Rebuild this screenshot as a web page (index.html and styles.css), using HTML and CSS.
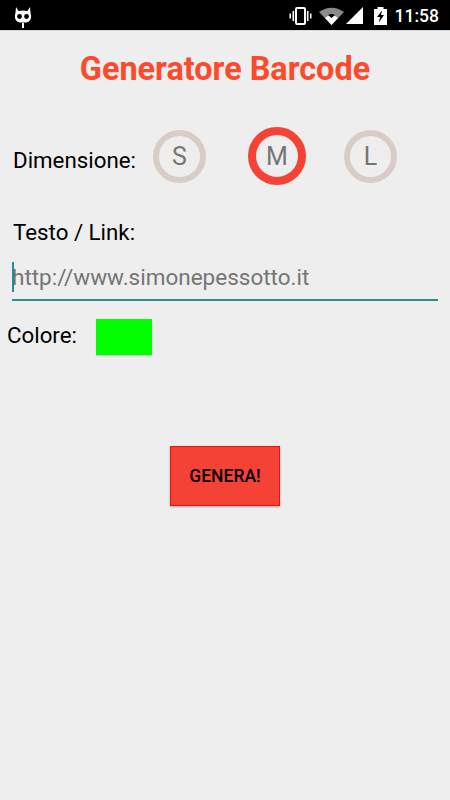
FILE: index.html
```html
<!DOCTYPE html>
<html lang="it">
<head>
  <meta charset="UTF-8" />
  <meta name="viewport" content="width=device-width, initial-scale=1.0"/>
  <title>Generatore Barcode</title>
  <link rel="stylesheet" href="styles.css">
</head>
<body>
  <!-- Status bar -->
  <div class="status-bar">
    <svg class="cat-icon" width="18" height="22" viewBox="0 0 18 22">
      <path d="M2 0 L4.500 4 Q9 3 13.500 4 L16 0 L16.500 6 Q17.500 8 17 11 Q16 15 12 15.500 L6 15.500 Q2 15 1 11 Q0.500 8 1.500 6 Z" fill="#fff"/>
      <circle cx="5.500" cy="9.500" r="2.400" fill="#000"/>
      <circle cx="12.500" cy="9.500" r="2.400" fill="#000"/>
      <rect x="8" y="16" width="2" height="5" fill="#fff"/>
    </svg>
    <div class="status-right">
      <svg width="23" height="18" viewBox="0 0 23 18">
        <rect x="7" y="1" width="9" height="16" rx="1" fill="none" stroke="#fff" stroke-width="2"/>
        <rect x="3.500" y="4" width="1.600" height="10" fill="#fff"/>
        <rect x="17.900" y="4" width="1.600" height="10" fill="#fff"/>
        <rect x="0.500" y="6.500" width="1.500" height="5" fill="#fff"/>
        <rect x="21" y="6.500" width="1.500" height="5" fill="#fff"/>
      </svg>
      <svg class="wifi" width="25" height="18" viewBox="0 0 25 18">
        <path d="M0 5 Q12.500 -3.500 25 5 L12.500 18 Z" fill="#8a8a8a"/>
        <path d="M6 11 Q12.500 5 19 11 L12.500 18 Z" fill="#fff"/>
        <path d="M9 8 Q12.500 6 16 8 L12.500 11 Z" fill="#000"/>
      </svg>
      <svg class="signal" width="17" height="17" viewBox="0 0 17 17">
        <path d="M0 17 L17 0 L17 17 Z" fill="#fff"/>
      </svg>
      <svg class="battery" width="13" height="18" viewBox="0 0 13 18">
        <path d="M3.500 0 H9.500 V2 H13 V18 H0 V2 H3.500 Z" fill="#fff"/>
        <path d="M8 3.500 L3 10 H6 L5 15.500 L10 8 H7 Z" fill="#000"/>
      </svg>
      <span class="clock">11:58</span>
    </div>
  </div>

  <div class="content">
    <h1 class="title">Generatore Barcode</h1>

    <!-- Dimensione -->
    <div class="size-row">
      <span class="label size-label">Dimensione:</span>
      <div class="size-options">
        <div class="size-btn">S</div>
        <div class="size-btn active">M</div>
        <div class="size-btn">L</div>
      </div>
    </div>

    <div class="label link-label">Testo / Link:</div>
    <div class="link-input">
      <span class="cursor"></span>
      <span class="placeholder">http://www.simonepessotto.it</span>
    </div>

    <!-- Colore -->
    <div class="color-row">
      <span class="label color-label">Colore:</span>
      <div class="color-box"></div>
    </div>

    <div class="button-row">
      <button class="generate">GENERA!</button>
    </div>
  </div>
</body>
</html>
```

FILE: styles.css
```css
body {
  margin: 0;
  height: 800px;
  overflow: hidden;
  font-family: Roboto, "Liberation Sans", sans-serif;
  background-color: #eeeeee;
}

.status-bar {
  height: 30px;
  background-color: #000;
  border-bottom: 1px solid #d8d8d8;
  display: flex;
  align-items: center;
  justify-content: space-between;
  padding: 0 11px 0 14px;
}

.cat-icon {
  margin-top: 5px;
}

.status-right {
  display: flex;
  align-items: center;
  margin-top: 1px;
}

.wifi {
  margin-left: 7px;
}

.signal {
  margin-left: 2px;
}

.battery {
  margin-left: 11px;
}

.clock {
  margin-left: 8px;
  color: #fff;
  font-size: 17.500px;
  font-weight: 500;
}

.title {
  margin: 0;
  padding-top: 19px;
  height: 38px;
  line-height: 38px;
  text-align: center;
  font-size: 32.4px;
  font-weight: 700;
  color: #fb4a2c;
}

.label {
  font-size: 22.300px;
  line-height: 26px;
  color: #000;
}

.size-row {
  display: flex;
  align-items: center;
  height: 58px;
  margin-top: 39px;
  padding-left: 13px;
}

.size-label {
  padding-top: 8px;
}

.size-options {
  display: flex;
  align-items: center;
  margin-left: 17px;
}

.size-btn {
  width: 53px;
  height: 53px;
  box-sizing: border-box;
  border: 6px solid #d7ccc8;
  border-radius: 50%;
  display: flex;
  align-items: center;
  justify-content: center;
  padding-top: 1px;
  font-size: 25px;
  color: #757575;
}

.size-btn.active {
  width: 58px;
  height: 58px;
  border: 8px solid #f44336;
  margin: 0 38px 0 42px;
}

.link-label {
  margin-top: 34px;
  padding-left: 13px;
}

.link-input {
  display: flex;
  align-items: center;
  height: 38px;
  margin: 13px 12px 0 12px;
  padding-bottom: 3px;
  border-bottom: 2px solid #26918a;
}

.cursor {
  width: 2px;
  height: 30px;
  background-color: #26918a;
  flex-shrink: 0;
}

.placeholder {
  margin-left: -2px;
  font-size: 22.500px;
  color: #757575;
}

.color-row {
  display: flex;
  align-items: center;
  margin-top: 18px;
  padding-left: 7px;
}

.color-label {
  margin-bottom: 4px;
}

.color-box {
  width: 56px;
  height: 36px;
  margin-left: 19px;
  background-color: #00ff00;
  box-shadow: 0 1px 1px rgba(0, 0, 0, 0.15);
}

.button-row {
  display: flex;
  justify-content: center;
  margin-top: 91px;
}

.generate {
  width: 110px;
  height: 60px;
  padding: 0;
  border: 1px solid #f01010;
  border-radius: 0;
  background-color: #f44336;
  box-shadow: 0 1px 2px rgba(0, 0, 0, 0.3);
  color: #000;
  font-family: Roboto, "Liberation Sans", sans-serif;
  font-size: 17.500px;
  font-weight: 500;
}
```
